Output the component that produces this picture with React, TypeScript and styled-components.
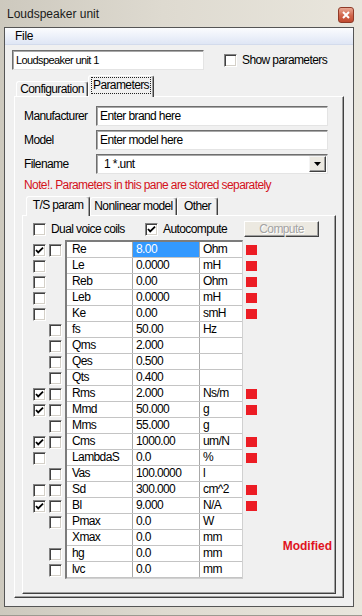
import React from "react";
import styled, { createGlobalStyle, css } from "styled-components";

const UI_FONT = `"Liberation Sans", Arial, sans-serif`;

const GlobalStyle = createGlobalStyle`
  html, body { margin: 0; padding: 0; background: #d8d4c9; }
  body { font-family: ${UI_FONT}; color: #000; letter-spacing: -0.6px; }
  * { box-sizing: border-box; }
`;

type Param = {
    name: string;
    value: string;
    unit: string;
    c1?: boolean;
    c2?: boolean;
    mark?: boolean;
    selected?: boolean;
};

const params: Param[] = [
    { name: "Re", value: "8.00", unit: "Ohm", c1: true, c2: false, mark: true, selected: true },
    { name: "Le", value: "0.0000", unit: "mH", c1: false, mark: true },
    { name: "Reb", value: "0.00", unit: "Ohm", c1: false, mark: true },
    { name: "Leb", value: "0.0000", unit: "mH", c1: false, mark: true },
    { name: "Ke", value: "0.00", unit: "smH", c1: false, mark: true },
    { name: "fs", value: "50.00", unit: "Hz", c2: false },
    { name: "Qms", value: "2.000", unit: "", c2: false },
    { name: "Qes", value: "0.500", unit: "", c2: false },
    { name: "Qts", value: "0.400", unit: "", c2: false },
    { name: "Rms", value: "2.000", unit: "Ns/m", c1: true, c2: false, mark: true },
    { name: "Mmd", value: "50.000", unit: "g", c1: true, c2: false, mark: true },
    { name: "Mms", value: "55.000", unit: "g", c2: false },
    { name: "Cms", value: "1000.00", unit: "um/N", c1: true, c2: false, mark: true },
    { name: "LambdaS", value: "0.0", unit: "%", c1: false, mark: true },
    { name: "Vas", value: "100.0000", unit: "l", c2: false },
    { name: "Sd", value: "300.000", unit: "cm^2", c1: false, c2: false, mark: true },
    { name: "Bl", value: "9.000", unit: "N/A", c1: true, c2: false, mark: true },
    { name: "Pmax", value: "0.0", unit: "W", c2: false },
    { name: "Xmax", value: "0.0", unit: "mm" },
    { name: "hg", value: "0.0", unit: "mm", c2: false },
    { name: "lvc", value: "0.0", unit: "mm", c2: false },
];

const Window = styled.div`
  width: 362px;
  height: 616px;
  display: flex;
  flex-direction: column;
  padding: 0 8px 8px 4px;
  background: linear-gradient(to right, #cdc9be, #dedad0 45%, #e9e6dd);
  border-bottom: 1px solid #9c9990;
`;

const TitleBar = styled.div`
  height: 27px;
  flex: none;
  display: flex;
  align-items: flex-start;
  justify-content: space-between;
  padding: 7px 0 0 3px;
`;

const Title = styled.span`
  font-size: 12px;
  line-height: 14px;
  letter-spacing: 0;
  color: #1a1a1a;
`;

const CloseButton = styled.div`
  width: 16px;
  height: 16px;
  border-radius: 3px;
  border: 1px solid #8f3b28;
  background: linear-gradient(#e9a893, #d0644a 55%, #c04a30);
  display: flex;
  align-items: center;
  justify-content: center;
`;

const Client = styled.div`
  flex: 1;
  display: flex;
  flex-direction: column;
  background: #f0f0f0;
  border: 1px solid #555;
  min-height: 0;
`;

const MenuBar = styled.div`
  height: 17px;
  flex: none;
  display: flex;
  align-items: center;
  padding-left: 10px;
  background: linear-gradient(#fbfcfe, #dfe6f5);
  border-bottom: 1px solid #d3dbec;
  font-size: 12px;
  letter-spacing: -0.3px;
`;

const TopRow = styled.div`
  display: flex;
  align-items: center;
  margin: 5px 0 0 7px;
`;

const TextBox = styled.div<{ $w?: number; $size?: number }>`
  ${p => p.$w && css`width: ${p.$w}px;`}
  height: 20px;
  display: flex;
  align-items: center;
  padding-left: 3px;
  background: #fff;
  border: 1px solid;
  border-color: #6e6e6e #e4e4e4 #e4e4e4 #6e6e6e;
  box-shadow: inset 1px 1px 0 #a8a8a8;
  font-size: ${p => p.$size ?? 12}px;
  white-space: nowrap;
  overflow: hidden;
`;

const CheckLabel = styled.label<{ $w?: number }>`
  display: flex;
  align-items: center;
  gap: 5px;
  font-size: 12px;
  ${p => p.$w && css`width: ${p.$w}px;`}
`;

const ShowParams = styled(CheckLabel)`
  margin-left: 20px;
`;

const Box = styled.span`
  width: 13px;
  height: 13px;
  flex: none;
  display: inline-flex;
  align-items: center;
  justify-content: center;
  background: #fff;
  border: 1px solid;
  border-color: #848484 #fff #fff #848484;
  box-shadow: inset 1px 1px 0 #404040, inset -1px -1px 0 #d4d0c8;
`;

const TabStrip = styled.div<{ $top: number; $left: number }>`
  display: flex;
  align-items: flex-end;
  margin: ${p => p.$top}px 0 0 ${p => p.$left}px;
`;

const Tab = styled.div<{ $w: number; $h: number; $active?: boolean }>`
  width: ${p => p.$w}px;
  height: ${p => p.$h}px;
  display: flex;
  align-items: center;
  justify-content: center;
  background: #f0f0f0;
  border-top: 1px solid #fff;
  border-left: 1px solid #fff;
  border-right: 1px solid #404040;
  border-radius: 3px 3px 0 0;
  box-shadow: inset -1px 0 0 #a0a0a0;
  font-size: 12px;
  white-space: nowrap;
  padding-bottom: 1px;
  ${p => p.$active && css`
    height: ${p.$h + 1}px;
    margin-bottom: -1px;
    padding-bottom: 3px;
    position: relative;
    z-index: 1;
  `}
`;

const Focus = styled.span`
  border: 1px dotted #222;
  padding: 0 1px;
  line-height: 15px;
`;

const Pane = styled.div<{ $margin: string; $padding: string }>`
  flex: 1;
  display: flex;
  flex-direction: column;
  margin: ${p => p.$margin};
  padding: ${p => p.$padding};
  background: #f0f0f0;
  border: 1px solid;
  border-color: #fff #404040 #404040 #fff;
  box-shadow: inset -1px -1px 0 #a0a0a0;
  min-height: 0;
`;

const Form = styled.div`
  display: grid;
  grid-template-columns: 72px 1fr;
  grid-auto-rows: 20px;
  row-gap: 4px;
  align-items: center;
  margin: 0 8px 0 2px;
  font-size: 12px;
`;

const Combo = styled(TextBox)`
  justify-content: space-between;
  padding-left: 7px;
  padding-right: 1px;
`;

const DropButton = styled.span`
  width: 17px;
  height: 16px;
  display: flex;
  align-items: center;
  justify-content: center;
  background: #ece9e1;
  border: 1px solid;
  border-color: #f4f4f4 #404040 #404040 #f4f4f4;
  box-shadow: inset -1px -1px 0 #9a9a9a;
`;

const Note = styled.div`
  margin: 4px 0 0 2px;
  height: 14px;
  line-height: 14px;
  font-size: 12px;
  color: #d4111b;
  white-space: nowrap;
`;

const OptionsRow = styled.div`
  display: flex;
  align-items: center;
  height: 16px;
`;

const Button = styled.div`
  width: 75px;
  height: 16px;
  display: flex;
  align-items: center;
  justify-content: center;
  background: #ece9e1;
  border: 1px solid;
  border-color: #fff #404040 #404040 #fff;
  box-shadow: inset -1px -1px 0 #a0a0a0;
  font-size: 12px;
  color: #a3a3a3;
  text-shadow: 1px 1px 0 #fff;
`;

const TableArea = styled.div`
  display: flex;
  margin-top: 3px;
`;

const SideCol = styled.div<{ $w: number; $gap?: number }>`
  width: ${p => p.$w}px;
  flex: none;
  padding-top: 2px;
  display: flex;
  flex-direction: column;
  margin-left: ${p => p.$gap ?? 0}px;
`;

const SideRow = styled.div`
  height: 16px;
  display: flex;
  align-items: center;
  gap: 3px;
`;

const BoxSlot = styled.span`
  width: 13px;
  height: 13px;
  flex: none;
`;

const Marker = styled.span`
  width: 11px;
  height: 10px;
  background: #ec1c24;
`;

const Table = styled.div`
  width: 178px;
  flex: none;
  border-style: solid;
  border-width: 2px 1px 1px 2px;
  border-color: #7c7c7c #d0d0d0 #d0d0d0 #7c7c7c;
  background: #fff;
  font-size: 12px;
`;

const Row = styled.div`
  height: 16px;
  display: flex;
  border-bottom: 1px solid #c4c4c4;
`;

const Cell = styled.div<{ $w: number; $pad: number; $last?: boolean; $selected?: boolean }>`
  width: ${p => p.$w}px;
  flex: none;
  padding-left: ${p => p.$pad}px;
  line-height: 15px;
  white-space: nowrap;
  overflow: hidden;
  border-right: ${p => (p.$last ? "none" : "1px solid #a8a8a8")};
  ${p => p.$selected && css`
    background: #3399ff;
    color: #fff;
  `}
`;

const Aside = styled.div`
  flex: 1;
  display: flex;
  flex-direction: column;
  justify-content: flex-end;
  align-items: flex-end;
  padding: 0 3px 26px 0;
`;

const Modified = styled.span`
  font-weight: bold;
  font-size: 12px;
  letter-spacing: 0;
  color: #e0131d;
`;

const Tick = () => (
    <svg width="9" height="9" viewBox="0 0 9 9">
        <path d="M1 4 L3.2 6.4 L8 1.6" fill="none" stroke="#000" strokeWidth="1.8" />
    </svg>
);

const CheckBox = ({ checked }: { checked?: boolean }) => <Box>{checked && <Tick />}</Box>;

const Slot = ({ state }: { state?: boolean }) =>
    state === undefined ? <BoxSlot /> : <CheckBox checked={state} />;

export default function App() {
    return (
        <>
            <GlobalStyle />
            <Window>
                <TitleBar>
                    <Title>Loudspeaker unit</Title>
                    <CloseButton>
                        <svg width="8" height="8" viewBox="0 0 8 8">
                            <path d="M1 1 L7 7 M7 1 L1 7" stroke="#fff" strokeWidth="2" />
                        </svg>
                    </CloseButton>
                </TitleBar>
                <Client>
                    <MenuBar>File</MenuBar>
                    <TopRow>
                        <TextBox $w={192} $size={11}>Loudspeaker unit 1</TextBox>
                        <ShowParams>
                            <CheckBox />
                            Show parameters
                        </ShowParams>
                    </TopRow>

                    <TabStrip $top={5} $left={11}>
                        <Tab $w={72} $h={15}>Configuration</Tab>
                        <Tab $w={66} $h={21} $active>
                            <Focus>Parameters</Focus>
                        </Tab>
                    </TabStrip>

                    <Pane $margin="0 9px 8px 9px" $padding="9px 7px 3px 7px">
                        <Form>
                            <span>Manufacturer</span>
                            <TextBox>Enter brand here</TextBox>
                            <span>Model</span>
                            <TextBox>Enter model here</TextBox>
                            <span>Filename</span>
                            <Combo>
                                1 *.unt
                                <DropButton>
                                    <svg width="7" height="4" viewBox="0 0 7 4">
                                        <path d="M0 0 H7 L3.5 4 Z" fill="#000" />
                                    </svg>
                                </DropButton>
                            </Combo>
                        </Form>
                        <Note>Note!. Parameters in this pane are stored separately</Note>

                        <TabStrip $top={4} $left={4}>
                            <Tab $w={64} $h={19} $active>T/S param</Tab>
                            <Tab $w={87} $h={18}>Nonlinear model</Tab>
                            <Tab $w={41} $h={18}>Other</Tab>
                        </TabStrip>

                        <Pane $margin="0" $padding="5px 0 0 10px">
                            <OptionsRow>
                                <CheckLabel $w={112}>
                                    <CheckBox />
                                    Dual voice coils
                                </CheckLabel>
                                <CheckLabel $w={99}>
                                    <CheckBox checked />
                                    Autocompute
                                </CheckLabel>
                                <Button>Compute</Button>
                            </OptionsRow>

                            <TableArea>
                                <SideCol $w={32}>
                                    {params.map(p => (
                                        <SideRow key={p.name}>
                                            <Slot state={p.c1} />
                                            <Slot state={p.c2} />
                                        </SideRow>
                                    ))}
                                </SideCol>
                                <Table>
                                    {params.map(p => (
                                        <Row key={p.name}>
                                            <Cell $w={66} $pad={5}>{p.name}</Cell>
                                            <Cell $w={67} $pad={3} $selected={p.selected}>{p.value}</Cell>
                                            <Cell $w={42} $pad={3} $last>{p.unit}</Cell>
                                        </Row>
                                    ))}
                                </Table>
                                <SideCol $w={11} $gap={3}>
                                    {params.map(p => (
                                        <SideRow key={p.name}>{p.mark && <Marker />}</SideRow>
                                    ))}
                                </SideCol>
                                <Aside>
                                    <Modified>Modified</Modified>
                                </Aside>
                            </TableArea>
                        </Pane>
                    </Pane>
                </Client>
            </Window>
        </>
    );
}
